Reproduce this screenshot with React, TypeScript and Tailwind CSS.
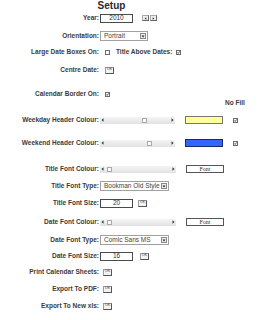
import React from 'react'

const font = { fontFamily: '"Liberation Sans", Arial, sans-serif' }

const Label: React.FC<{ text: string }> = ({ text }) => (
    <span className="w-[99px] shrink-0 text-right font-bold text-[6.5px] leading-none text-[#3a3a3a] whitespace-nowrap">{text}</span>
)

const Check: React.FC<{ checked?: boolean, className?: string }> = ({ checked, className }) => (
    <span className={`w-[5px] h-[5px] border border-[#6a6a6a] bg-white flex items-center justify-center ${className ?? ''}`}>
        {checked && (
            <svg width="3" height="3" viewBox="0 0 3 3">
                <path d="M0.3 1.5 L1.2 2.4 L2.7 0.4" stroke="#222" strokeWidth="0.8" fill="none" />
            </svg>
        )}
    </span>
)

const OkButton: React.FC<{ className?: string }> = ({ className }) => (
    <span className={`w-[9px] h-[7px] border border-[#9a9a9a] border-r-[#555] border-b-[#555] bg-[#f2f2f2] flex items-center justify-center text-[3.5px] leading-none text-[#333] ${className ?? ''}`}>OK</span>
)

const TextBox: React.FC<{ value: string }> = ({ value }) => (
    <span className="ml-[1px] w-[33px] h-[9px] border border-[#4a4a4a] bg-white flex items-center justify-center text-[6.5px] leading-none text-[#333]">{value}</span>
)

const Select: React.FC<{ value: string, width: string }> = ({ value, width }) => (
    <span className={`ml-[1px] ${width} h-[10px] border border-[#a0a0a0] bg-white flex items-center pl-[3px] text-[6.5px] leading-none text-[#444] whitespace-nowrap`}>
        {value}
        <span className="ml-auto mr-[1px] w-[6px] h-[6px] border border-[#888] bg-[#eee] flex items-center justify-center">
            <svg width="4" height="3" viewBox="0 0 4 3"><path d="M0.5 0.5 L3.5 0.5 L2 2.5 Z" fill="#222" /></svg>
        </span>
    </span>
)

const Scroll: React.FC<{ thumb: number, width: string }> = ({ thumb, width }) => (
    <span className={`relative ml-[1px] ${width} h-[7px] bg-gradient-to-b from-[#f4f4f4] to-[#e2e2e2] flex items-center justify-between px-[1px]`}>
        <svg width="3" height="4" viewBox="0 0 3 4"><path d="M2.5 0.3 L0.5 2 L2.5 3.7 Z" fill="#333" /></svg>
        <svg width="3" height="4" viewBox="0 0 3 4"><path d="M0.5 0.3 L2.5 2 L0.5 3.7 Z" fill="#333" /></svg>
        <span className="absolute top-[1px] w-[5px] h-[5px] border border-[#aaa] bg-[#fafafa]" style={{ left: thumb }} />
    </span>
)

const FontButton = () => (
    <span className="ml-[10px] w-[38px] h-[8px] border border-[#555] bg-white flex items-center justify-center text-[6px] leading-none text-[#333]" style={{ fontFamily: '"Liberation Serif", serif' }}>Font</span>
)

const Spinner = () => (
    <span className="ml-[9px] flex gap-[1px]">
        <span className="w-[7px] h-[6px] border border-[#aaa] border-r-[#666] border-b-[#666] bg-[#f0f0f0] flex items-center justify-center">
            <svg width="3" height="3" viewBox="0 0 3 3"><path d="M2.3 0.3 L0.6 1.5 L2.3 2.7 Z" fill="#333" /></svg>
        </span>
        <span className="w-[7px] h-[6px] border border-[#aaa] border-r-[#666] border-b-[#666] bg-[#f0f0f0] flex items-center justify-center">
            <svg width="3" height="3" viewBox="0 0 3 3"><path d="M0.7 0.3 L2.4 1.5 L0.7 2.7 Z" fill="#333" /></svg>
        </span>
    </span>
)

const App: React.FC = () => {
    return (
        <div className="w-[273px] h-[320px] bg-white overflow-hidden flex flex-col" style={font}>
            <div className="h-[12px] flex items-center justify-center pr-[50px]">
                <span className="font-bold text-[10px] leading-none text-[#2a2a2a]">Setup</span>
            </div>

            <div className="h-[12px] flex items-center">
                <Label text="Year:" />
                <TextBox value="2010" />
                <Spinner />
            </div>

            <div className="mt-[6px] h-[12px] flex items-center">
                <Label text="Orientation:" />
                <Select value="Portrait" width="w-[48px]" />
            </div>

            <div className="mt-[4px] h-[12px] flex items-center">
                <Label text="Large Date Boxes On:" />
                <Check className="ml-[6px]" />
                <span className="ml-[6px] font-bold text-[6.5px] leading-none text-[#3a3a3a]">Title Above Dates:</span>
                <Check checked className="ml-[4px]" />
            </div>

            <div className="mt-[6px] h-[12px] flex items-center">
                <Label text="Centre Date:" />
                <OkButton className="ml-[6px]" />
            </div>

            <div className="mt-[12px] h-[12px] flex items-center">
                <Label text="Calendar Border On:" />
                <Check checked className="ml-[6px]" />
            </div>

            <div className="h-[6px] flex items-center">
                <span className="ml-[225px] font-bold text-[6.5px] leading-none text-[#3a3a3a]">No Fill</span>
            </div>

            <div className="mt-[8px] h-[12px] flex items-center">
                <Label text="Weekday Header Colour:" />
                <Scroll thumb={42} width="w-[75px]" />
                <span className="ml-[10px] w-[38px] h-[8px] border border-[#777] bg-[#ffff99]" />
                <Check checked className="ml-[10px]" />
            </div>

            <div className="mt-[11px] h-[12px] flex items-center">
                <Label text="Weekend Header Colour:" />
                <Scroll thumb={47} width="w-[75px]" />
                <span className="ml-[10px] w-[38px] h-[8px] border border-[#1a2a66] bg-[#3366ff]" />
                <Check checked className="ml-[10px]" />
            </div>

            <div className="mt-[14px] h-[12px] flex items-center">
                <Label text="Title Font Colour:" />
                <Scroll thumb={7} width="w-[76px]" />
                <FontButton />
            </div>

            <div className="mt-[5px] h-[12px] flex items-center">
                <Label text="Title Font Type:" />
                <Select value="Bookman Old Style" width="w-[69px]" />
            </div>

            <div className="mt-[5px] h-[12px] flex items-center">
                <Label text="Title Font Size:" />
                <TextBox value="20" />
                <OkButton className="ml-[5px]" />
            </div>

            <div className="mt-[7px] h-[12px] flex items-center">
                <Label text="Date Font Colour:" />
                <Scroll thumb={7} width="w-[76px]" />
                <FontButton />
            </div>

            <div className="mt-[6px] h-[12px] flex items-center">
                <Label text="Date Font Type:" />
                <Select value="Comic Sans MS" width="w-[69px]" />
            </div>

            <div className="mt-[4px] h-[12px] flex items-center">
                <Label text="Date Font Size:" />
                <TextBox value="16" />
                <OkButton className="ml-[7px]" />
            </div>

            <div className="mt-[4px] h-[12px] flex items-center">
                <Label text="Print Calendar Sheets:" />
                <OkButton className="ml-[4px]" />
            </div>

            <div className="mt-[5px] h-[12px] flex items-center">
                <Label text="Export To PDF:" />
                <OkButton className="ml-[4px]" />
            </div>

            <div className="mt-[5px] h-[12px] flex items-center">
                <Label text="Export To New xls:" />
                <OkButton className="ml-[4px]" />
            </div>
        </div>
    )
}

export default App
